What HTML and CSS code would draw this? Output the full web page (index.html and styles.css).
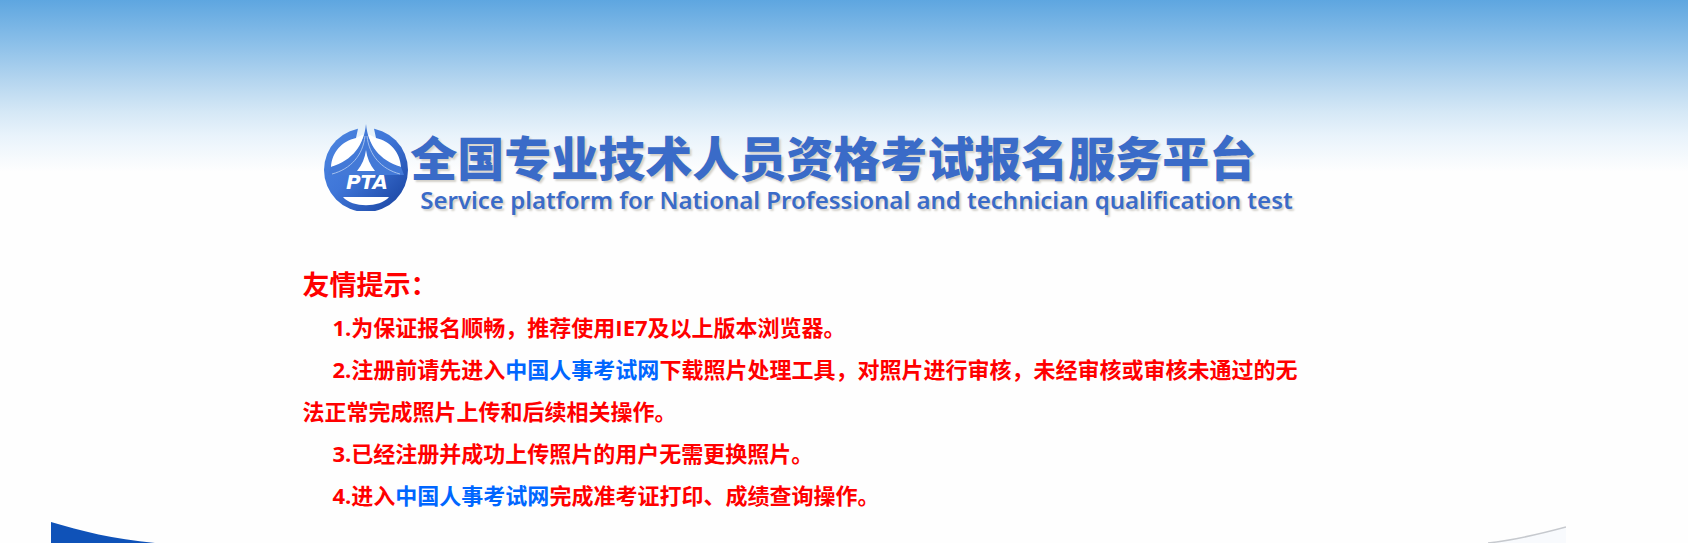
FILE: index.html
```html
<!DOCTYPE html>
<html lang="zh-CN">
<head>
    <meta charset="UTF-8">
    <meta name="viewport" content="width=device-width, initial-scale=1.0">
    <title>全国专业技术人员资格考试报名服务平台</title>
    <link rel="stylesheet" href="styles.css">
</head>
<body>
<div class="page">
    <header class="header">
        <svg class="logo" viewBox="0 0 84 88" role="img" aria-label="PTA">
            <defs>
                <linearGradient id="ball" x1="0" y1="0" x2="1" y2="1">
                    <stop offset="0" stop-color="#4d86e0"/>
                    <stop offset="0.45" stop-color="#3f76d8"/>
                    <stop offset="1" stop-color="#163f9c"/>
                </linearGradient>
                <clipPath id="round"><path d="M0 0H35L32 14H52L49 0H84V87H0Z"/></clipPath>
            </defs>
            <circle cx="42" cy="46" r="42" fill="url(#ball)" clip-path="url(#round)"/>
            <!-- side openings -->
            <path d="M38 11L32 14C18 17 8 28 7 43C22 41 36 29 40 11Z" fill="#fff"/>
            <path d="M46 11L52 14C66 17 76 28 77 43C62 41 48 29 44 11Z" fill="#fff"/>
            <!-- roof -->
            <path d="M42 0C40 21 29 36 7 43L4 51H80L77 43C55 36 44 21 42 0Z" fill="#4379d7"/>
            <path d="M41 12C39 31 27 45 8 50" fill="none" stroke="#a3c0ee" stroke-width="1"/>
            <path d="M43 12C45 31 57 45 76 50" fill="none" stroke="#a3c0ee" stroke-width="1"/>
            <path d="M42 26C41 34 38 41 33 47H51C46 41 43 34 42 26Z" fill="#fff"/>
            <text class="logo-text" x="43" y="65">PTA</text>
            <path d="M19 73H65C56 84 28 84 19 73Z" fill="#fff"/>
        </svg>
        <div class="title">
            <h1>全国专业技术人员资格考试报名服务平台</h1>
            <p>Service platform for National Professional and technician qualification test</p>
        </div>
    </header>

    <main class="notice">
        <h2>友情提示：</h2>
        <p>1.为保证报名顺畅，推荐使用IE7及以上版本浏览器。</p>
        <p>2.注册前请先进入<a href="#">中国人事考试网</a>下载照片处理工具，对照片进行审核，未经审核或审核未通过的无法正常完成照片上传和后续相关操作。</p>
        <p>3.已经注册并成功上传照片的用户无需更换照片。</p>
        <p>4.进入<a href="#">中国人事考试网</a>完成准考证打印、成绩查询操作。</p>
    </main>

    <div class="banner">
        <svg class="curve-left" viewBox="0 0 110 21" aria-hidden="true">
            <path d="M0 0C30 9 62 17 104 21H0Z" fill="#0f52b8"/>
        </svg>
        <svg class="curve-right" viewBox="0 0 110 21" aria-hidden="true">
            <path d="M110 5C84 12 60 18 32 21H110Z" fill="#f8fafd"/>
            <path d="M110 5C84 12 60 18 32 21" fill="none" stroke="#c6c9ce" stroke-width="1.5"/>
        </svg>
    </div>
</div>
</body>
</html>
```

FILE: styles.css
```css
* {
    box-sizing: border-box;
}
body {
    margin: 0;
    background: #fefefe linear-gradient(#5ea6e0, #8cc0e9 44px, #b4d5ef 80px, #d5e8f6 112px, #e9f3fb 136px, #fefefe 172px) no-repeat;
    font-family: "Open Sans", "Noto Sans CJK SC", sans-serif;
}
h1, h2, p {
    margin: 0;
}
.page {
    margin: 0 122px 0 51px;
}
.header {
    display: flex;
    justify-content: center;
    gap: 2px;
    padding-top: 124px;
}
.logo {
    width: 84px;
    height: 88px;
    flex: none;
}
.logo-text {
    font-family: "DejaVu Sans", sans-serif;
    font-size: 20px;
    font-weight: bold;
    font-style: oblique;
    text-anchor: middle;
    fill: #fff;
}
.title {
    color: #3a6bc8;
    text-shadow: 2px 2px 2px #d3d0c9;
    white-space: nowrap;
}
.title h1 {
    font-family: "Noto Sans CJK SC", sans-serif;
    font-size: 47px;
    font-weight: 900;
    line-height: 64px;
}
.title p {
    padding-left: 10px;
    font-family: "Noto Sans", sans-serif;
    font-size: 24px;
    font-weight: 600;
    line-height: 24px;
}
.notice {
    max-width: 1012px;
    margin: 0 auto;
    padding-top: 52px;
    color: #f00;
    font-size: 22px;
    font-weight: bold;
    line-height: 42px;
}
.notice h2 {
    font-size: 27px;
}
.notice p {
    text-indent: 30px;
}
.notice a {
    color: #06f;
    text-decoration: none;
}
.banner {
    display: flex;
    justify-content: space-between;
    padding-top: 6px;
}
.banner svg {
    display: block;
    width: 110px;
    height: 21px;
}
```
